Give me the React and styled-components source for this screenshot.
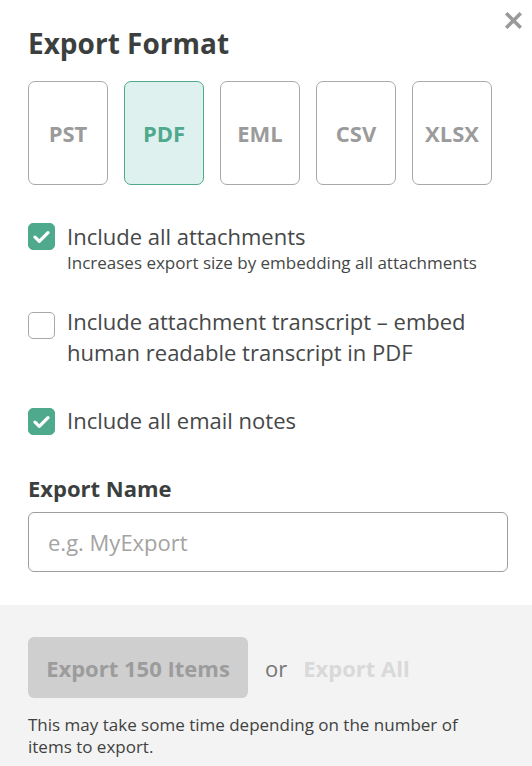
import React, { useState } from "react";
import styled, { createGlobalStyle } from "styled-components";

const Global = createGlobalStyle`
  html, body { margin: 0; padding: 0; background: #fff; }
  body { font-family: "Open Sans", "Noto Sans", sans-serif; }
  * { box-sizing: border-box; }
`;

const Panel = styled.div`
  width: 532px;
  height: 766px;
  position: relative;
  background: #fff;
  display: flex;
  flex-direction: column;
  overflow: hidden;
`;

const Body = styled.div`
  padding: 26px 24px 33px 28px;
  display: flex;
  flex-direction: column;
`;

const Close = styled.button`
  position: absolute;
  top: 9px;
  right: 8px;
  width: 22px;
  height: 22px;
  padding: 0;
  border: 0;
  background: none;
  display: flex;
  align-items: center;
  justify-content: center;
`;

const Title = styled.h1`
  margin: 0;
  font-size: 28px;
  line-height: 34px;
  font-weight: 700;
  color: #3b3f3e;
`;

const Formats = styled.div`
  display: flex;
  gap: 16px;
  margin-top: 21px;
`;

const FormatBox = styled.button`
  width: 80px;
  height: 104px;
  border-radius: 7px;
  border: 1px solid ${(p) => (p.$active ? "#4fa98c" : "#a9a9a9")};
  background: ${(p) => (p.$active ? "#dff1ee" : "#fff")};
  color: ${(p) => (p.$active ? "#4fa98c" : "#9b9b9b")};
  font-family: "Open Sans", sans-serif;
  font-weight: 700;
  font-size: 22px;
  padding: 0;
  display: flex;
  align-items: center;
  justify-content: center;
`;

const Options = styled.div`
  display: flex;
  flex-direction: column;
`;

const CheckRow = styled.label`
  display: flex;
  align-items: flex-start;
  gap: 12px;
  margin-top: ${(p) => p.$mt}px;
`;

const Box = styled.span`
  flex: none;
  width: 27px;
  height: 27px;
  margin-top: ${(p) => p.$mt || 2}px;
  border-radius: 5px;
  background: ${(p) => (p.$checked ? "#4fa98c" : "#fff")};
  border: 1px solid ${(p) => (p.$checked ? "#4fa98c" : "#a9a9a9")};
  display: flex;
  align-items: center;
  justify-content: center;
`;

const LabelText = styled.div`
  display: flex;
  flex-direction: column;
`;

const Main = styled.span`
  font-size: 22px;
  line-height: 31px;
  color: #454848;
`;

const Sub = styled.span`
  font-size: 17px;
  line-height: 22px;
  color: #454848;
`;

const FieldLabel = styled.div`
  margin-top: 37px;
  font-size: 22px;
  line-height: 30px;
  font-weight: 700;
  color: #3b3f3e;
`;

const Input = styled.input`
  margin-top: 9px;
  width: 480px;
  height: 60px;
  border: 1px solid #9e9e9e;
  border-radius: 6px;
  padding: 0 19px;
  font-family: "Open Sans", sans-serif;
  font-size: 22px;
  color: #333;
  outline: none;
  &::placeholder { color: #a3a3a3; }
`;

const Footer = styled.div`
  flex: 1;
  background: #f3f3f3;
  padding: 32px 24px 0 28px;
`;

const Actions = styled.div`
  display: flex;
  align-items: center;
`;

const Primary = styled.button`
  width: 220px;
  height: 61px;
  border: 0;
  border-radius: 6px;
  background: #cfcfcf;
  color: #9c9c9c;
  font-family: "Open Sans", sans-serif;
  font-weight: 700;
  font-size: 22px;
  padding: 0;
`;

const Or = styled.span`
  margin-left: 17px;
  font-size: 22px;
  color: #767676;
`;

const LinkBtn = styled.button`
  margin-left: 16px;
  border: 0;
  background: none;
  padding: 0;
  font-family: "Open Sans", sans-serif;
  font-weight: 700;
  font-size: 22px;
  color: #d9d9d9;
`;

const Note = styled.p`
  margin: 16px 0 0;
  font-size: 17px;
  line-height: 22px;
  color: #3f4241;
  max-width: 460px;
`;

const Check = () => (
  <svg width="17" height="14" viewBox="0 0 17 14">
    <path d="M2 7.2l4.3 4.2L15 2.6" fill="none" stroke="#fff" strokeWidth="3.2" strokeLinecap="round" strokeLinejoin="round" />
  </svg>
);

export default function App() {
  const [fmt, setFmt] = useState("PDF");
  return (
    <Panel>
      <Global />
      <Close aria-label="Close">
        <svg width="17" height="17" viewBox="0 0 17 17">
          <path d="M2.5 2.5l12 12M14.5 2.5l-12 12" stroke="#9a9a9a" strokeWidth="3.6" strokeLinecap="square" />
        </svg>
      </Close>
      <Body>
        <Title>Export Format</Title>
        <Formats>
          {["PST", "PDF", "EML", "CSV", "XLSX"].map((f) => (
            <FormatBox key={f} $active={fmt === f} onClick={() => setFmt(f)}>
              {f}
            </FormatBox>
          ))}
        </Formats>
        <Options>
          <CheckRow $mt={36}>
            <Box $checked><Check /></Box>
            <LabelText>
              <Main>Include all attachments</Main>
              <Sub>Increases export size by embedding all attachments</Sub>
            </LabelText>
          </CheckRow>
          <CheckRow $mt={32}>
            <Box $mt={6} />
            <LabelText>
              <Main>
                Include attachment transcript – embed
                <br />
                human readable transcript in PDF
              </Main>
            </LabelText>
          </CheckRow>
          <CheckRow $mt={37}>
            <Box $checked $mt={3}><Check /></Box>
            <LabelText>
              <Main>Include all email notes</Main>
            </LabelText>
          </CheckRow>
        </Options>
        <FieldLabel>Export Name</FieldLabel>
        <Input placeholder="e.g. MyExport" />
      </Body>
      <Footer>
        <Actions>
          <Primary>Export 150 Items</Primary>
          <Or>or</Or>
          <LinkBtn>Export All</LinkBtn>
        </Actions>
        <Note>This may take some time depending on the number of items to export.</Note>
      </Footer>
    </Panel>
  );
}
